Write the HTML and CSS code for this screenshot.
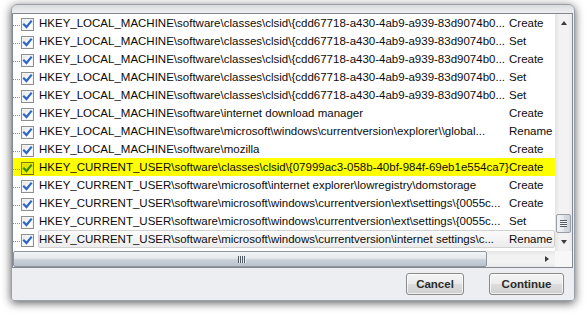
FILE: index.html
```html
<!DOCTYPE html>
<html>
<head>
<meta charset="utf-8">
<link rel="stylesheet" href="styles.css">
</head>
<body>
<div class="window">
  <div class="list">
    <div class="listbody">
      <div class="rows">
        <div class="row"><span class="dots"></span><span class="cb"><svg width="11" height="11" viewBox="0 0 11 11"><path d="M2 5.5 L4.5 8 L9 2.5" /></svg></span><span class="cells"><span class="c1">HKEY_LOCAL_MACHINE\software\classes\clsid\{cdd67718-a430-4ab9-a939-83d9074b0...</span><span class="c2">Create</span></span></div>
        <div class="row"><span class="dots"></span><span class="cb"><svg width="11" height="11" viewBox="0 0 11 11"><path d="M2 5.5 L4.5 8 L9 2.5" /></svg></span><span class="cells"><span class="c1">HKEY_LOCAL_MACHINE\software\classes\clsid\{cdd67718-a430-4ab9-a939-83d9074b0...</span><span class="c2">Set</span></span></div>
        <div class="row"><span class="dots"></span><span class="cb"><svg width="11" height="11" viewBox="0 0 11 11"><path d="M2 5.5 L4.5 8 L9 2.5" /></svg></span><span class="cells"><span class="c1">HKEY_LOCAL_MACHINE\software\classes\clsid\{cdd67718-a430-4ab9-a939-83d9074b0...</span><span class="c2">Create</span></span></div>
        <div class="row"><span class="dots"></span><span class="cb"><svg width="11" height="11" viewBox="0 0 11 11"><path d="M2 5.5 L4.5 8 L9 2.5" /></svg></span><span class="cells"><span class="c1">HKEY_LOCAL_MACHINE\software\classes\clsid\{cdd67718-a430-4ab9-a939-83d9074b0...</span><span class="c2">Set</span></span></div>
        <div class="row"><span class="dots"></span><span class="cb"><svg width="11" height="11" viewBox="0 0 11 11"><path d="M2 5.5 L4.5 8 L9 2.5" /></svg></span><span class="cells"><span class="c1">HKEY_LOCAL_MACHINE\software\classes\clsid\{cdd67718-a430-4ab9-a939-83d9074b0...</span><span class="c2">Set</span></span></div>
        <div class="row"><span class="dots"></span><span class="cb"><svg width="11" height="11" viewBox="0 0 11 11"><path d="M2 5.5 L4.5 8 L9 2.5" /></svg></span><span class="cells"><span class="c1">HKEY_LOCAL_MACHINE\software\internet download manager</span><span class="c2">Create</span></span></div>
        <div class="row"><span class="dots"></span><span class="cb"><svg width="11" height="11" viewBox="0 0 11 11"><path d="M2 5.5 L4.5 8 L9 2.5" /></svg></span><span class="cells"><span class="c1">HKEY_LOCAL_MACHINE\software\microsoft\windows\currentversion\explorer\\global...</span><span class="c2">Rename</span></span></div>
        <div class="row"><span class="dots"></span><span class="cb"><svg width="11" height="11" viewBox="0 0 11 11"><path d="M2 5.5 L4.5 8 L9 2.5" /></svg></span><span class="cells"><span class="c1">HKEY_LOCAL_MACHINE\software\mozilla</span><span class="c2">Create</span></span></div>
        <div class="row hl"><span class="dots"></span><span class="cb"><svg width="11" height="11" viewBox="0 0 11 11"><path d="M2 5.5 L4.5 8 L9 2.5" /></svg></span><span class="cells"><span class="c1">HKEY_CURRENT_USER\software\classes\clsid\{07999ac3-058b-40bf-984f-69eb1e554ca7}</span><span class="c2">Create</span></span></div>
        <div class="row"><span class="dots"></span><span class="cb"><svg width="11" height="11" viewBox="0 0 11 11"><path d="M2 5.5 L4.5 8 L9 2.5" /></svg></span><span class="cells"><span class="c1">HKEY_CURRENT_USER\software\microsoft\internet explorer\lowregistry\domstorage</span><span class="c2">Create</span></span></div>
        <div class="row"><span class="dots"></span><span class="cb"><svg width="11" height="11" viewBox="0 0 11 11"><path d="M2 5.5 L4.5 8 L9 2.5" /></svg></span><span class="cells"><span class="c1">HKEY_CURRENT_USER\software\microsoft\windows\currentversion\ext\settings\{0055c...</span><span class="c2">Create</span></span></div>
        <div class="row"><span class="dots"></span><span class="cb"><svg width="11" height="11" viewBox="0 0 11 11"><path d="M2 5.5 L4.5 8 L9 2.5" /></svg></span><span class="cells"><span class="c1">HKEY_CURRENT_USER\software\microsoft\windows\currentversion\ext\settings\{0055c...</span><span class="c2">Set</span></span></div>
        <div class="row"><span class="dots"></span><span class="cb"><svg width="11" height="11" viewBox="0 0 11 11"><path d="M2 5.5 L4.5 8 L9 2.5" /></svg></span><span class="cells hot"><span class="c1">HKEY_CURRENT_USER\software\microsoft\windows\currentversion\internet settings\c...</span><span class="c2">Rename</span></span></div>
      </div>
      <div class="vscroll">
        <div class="sbtn"><span class="tri-up"></span></div>
        <div class="vtrack"></div>
        <div class="vthumb"><span class="vgrip"></span></div>
        <div class="sbtn down"><span class="tri-down"></span></div>
      </div>
    </div>
    <div class="hscroll">
      <div class="hthumb"><span class="hgrip"></span></div>
      <div class="htrack"></div>
      <div class="hbtn"><span class="tri-right"></span></div>
      <div class="corner"></div>
    </div>
  </div>
  <div class="buttons">
    <button class="btn cancel">Cancel</button>
    <button class="btn cont">Continue</button>
  </div>
</div>
</body>
</html>
```
FILE: styles.css
```css
* { box-sizing: border-box; }
html, body { margin: 0; padding: 0; }
body {
  width: 588px;
  height: 315px;
  overflow: hidden;
  background: #ffffff;
  font-family: "Liberation Sans", Arial, sans-serif;
  font-size: 11.5px;
  color: #0c0c0c;
}
.window {
  margin: 4px 0 0 11px;
  width: 564px;
  height: 297px;
  background: linear-gradient(180deg, #d9dadc 0, #e8e9eb 5px, #eceef1 9px);
  border: 1px solid #9aa0a7;
  border-radius: 6px 6px 3px 3px;
  box-shadow: 0 2px 10px rgba(0, 0, 0, 0.65);
  padding-top: 8px;
  display: flex;
  flex-direction: column;
}
.list {
  width: 561px;
  height: 255px;
  border: 1px solid #828790;
  background: #ffffff;
  display: flex;
  flex-direction: column;
}
.listbody {
  height: 237px;
  display: flex;
}
.rows {
  flex: 1;
  display: flex;
  flex-direction: column;
  overflow: hidden;
}
.row {
  height: 18px;
  flex: none;
  display: flex;
  align-items: flex-start;
}
.row.hl { background: #ffff00; }
.dots {
  width: 8px;
  height: 1px;
  margin-top: 11px;
  background: repeating-linear-gradient(90deg, #8c8c8c 0 1px, transparent 1px 2px);
}
.cb {
  width: 13px;
  height: 13px;
  margin-top: 4px;
  border: 1px solid #8e8f8f;
  background: linear-gradient(135deg, #e4e4e4, #ffffff 70%);
  box-shadow: inset 0 0 0 1px #f4f4f4;
  display: flex;
  align-items: center;
  justify-content: center;
}
.cb svg path {
  fill: none;
  stroke: #2c67c9;
  stroke-width: 2.2;
  stroke-linecap: square;
}
.row.hl .cb {
  border-color: #7a7a00;
  background: linear-gradient(135deg, #d8d800, #f4f400 70%);
  box-shadow: inset 0 0 0 1px #ecec00;
}
.row.hl .cb svg path { stroke: #3a8a00; }
.cells {
  flex: 1;
  height: 18px;
  margin-left: 4px;
  border: 1px solid transparent;
  display: flex;
  line-height: 16px;
  white-space: nowrap;
}
.cells.hot {
  border-color: #d2d2d2;
  border-radius: 2px;
  background: linear-gradient(#fbfbfb, #ececec);
}
.c1 {
  width: 470px;
  flex: none;
  overflow: hidden;
}
.c2 { flex: 1; overflow: hidden; }

.vscroll {
  width: 17px;
  display: flex;
  flex-direction: column;
  background: linear-gradient(90deg, #e4e4e4, #f2f2f2 25%, #f3f3f3 75%, #e9e9e9);
}
.sbtn {
  height: 17px;
  display: flex;
  align-items: center;
  justify-content: center;
}
.sbtn.down { height: 18px; }
.tri-up {
  width: 0; height: 0;
  border-left: 3.5px solid transparent;
  border-right: 3.5px solid transparent;
  border-bottom: 4px solid #3c3c3c;
}
.tri-down {
  width: 0; height: 0;
  border-left: 3.5px solid transparent;
  border-right: 3.5px solid transparent;
  border-top: 4px solid #3c3c3c;
}
.vtrack { flex: 1; }
.vthumb {
  height: 19px;
  margin: 0 1px;
  border: 1px solid #979ea6;
  border-radius: 2px;
  background: linear-gradient(90deg, #f3f4f6, #e6e9ec 50%, #d6dce2 51%, #cdd3da);
  display: flex;
  align-items: center;
  justify-content: center;
}
.vgrip {
  width: 7px;
  height: 7px;
  background: repeating-linear-gradient(180deg, #525a63 0 1px, #f3f5f7 1px 2px);
}
.hscroll {
  height: 16px;
  display: flex;
}
.hthumb {
  width: 474px;
  border: 1px solid #8e959d;
  border-radius: 2px;
  background: linear-gradient(180deg, #f3f5f7, #e5e9ec 45%, #cbd2d9 55%, #b9c2cb);
  display: flex;
  align-items: center;
  justify-content: center;
  padding-right: 16px;
}
.hgrip {
  width: 8px;
  height: 7px;
  background: repeating-linear-gradient(90deg, #4e565f 0 1px, #eef1f4 1px 2px);
}
.htrack {
  flex: 1;
  background: linear-gradient(180deg, #e6e6e6, #f2f2f2 30%, #f3f3f3 70%, #eaeaea);
}
.hbtn {
  width: 17px;
  display: flex;
  align-items: center;
  justify-content: center;
  background: linear-gradient(180deg, #e6e6e6, #f2f2f2 30%, #f3f3f3 70%, #eaeaea);
}
.tri-right {
  width: 0; height: 0;
  border-top: 3.5px solid transparent;
  border-bottom: 3.5px solid transparent;
  border-left: 4px solid #3c3c3c;
}
.corner {
  width: 17px;
  background: #f7f7f7;
}
.buttons {
  display: flex;
  justify-content: flex-end;
  gap: 25px;
  padding: 5px 10px 0 0;
}
.btn {
  height: 22px;
  margin: 0;
  padding: 0;
  border: 1px solid #8a8a8a;
  border-radius: 3px;
  background: linear-gradient(180deg, #f5f5f5, #ebebeb 50%, #dddddd 51%, #cfcfcf);
  box-shadow: inset 0 0 0 1px rgba(255, 255, 255, 0.7);
  font-family: "Liberation Sans", Arial, sans-serif;
  font-size: 11.5px;
  font-weight: bold;
  color: #2b2b2b;
}
.cancel { width: 58px; }
.cont { width: 75px; }
```
